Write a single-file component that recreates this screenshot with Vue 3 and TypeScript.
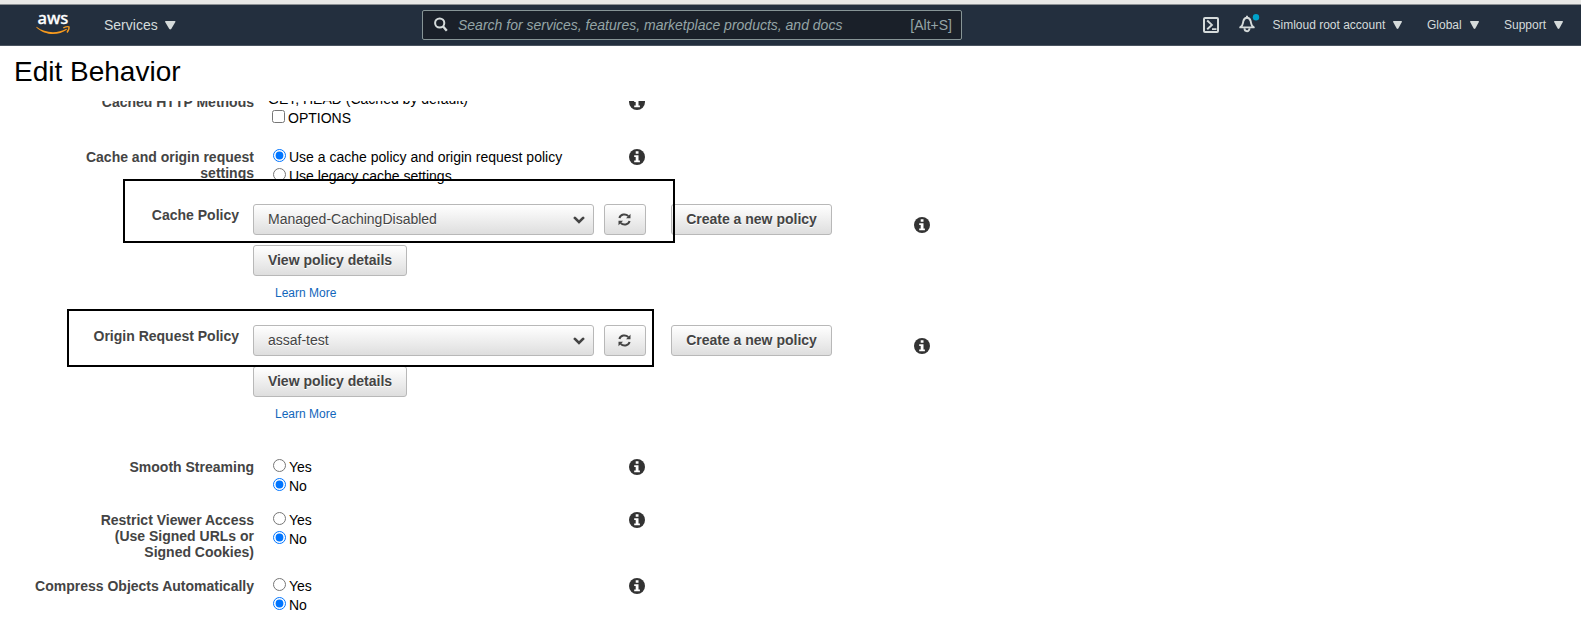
<script setup lang="ts">
import { defineComponent, h } from 'vue'

interface RadioRow {
  id: string
  label: string[]
  options: string[]
  selected: number
}

interface PolicyRow {
  id: string
  label: string
  value: string
}

const policies: PolicyRow[] = [
  { id: 'cache', label: 'Cache Policy', value: 'Managed-CachingDisabled' },
  { id: 'origin', label: 'Origin Request Policy', value: 'assaf-test' },
]

const toggles: RadioRow[] = [
  { id: 'smooth', label: ['Smooth Streaming'], options: ['Yes', 'No'], selected: 1 },
  {
    id: 'restrict',
    label: ['Restrict Viewer Access', '(Use Signed URLs or', 'Signed Cookies)'],
    options: ['Yes', 'No'],
    selected: 1,
  },
  { id: 'compress', label: ['Compress Objects Automatically'], options: ['Yes', 'No'], selected: 1 },
]

const originSettings = ['Use a cache policy and origin request policy', 'Use legacy cache settings']

const InfoIcon = defineComponent(() => () =>
  h('svg', { width: 16, height: 16, viewBox: '0 0 16 16' }, [
    h('circle', { cx: 8, cy: 8, r: 8, fill: '#333' }),
    h('path', { d: 'M6.7 2.2h2.8v2.5H6.7zM5.2 6.2h4.3v5.2h1.4v1.9H5.2v-1.9h1.5V8H5.2z', fill: '#fff' }),
  ]),
)

const Caret = defineComponent(() => () =>
  h('svg', { viewBox: '0 0 10 8', preserveAspectRatio: 'none' }, [
    h('path', { d: 'M0 .8Q0 0 .8 0H9.2Q10 0 10 .8L5.9 7.600Q5 8.200 4.100 7.600Z', fill: '#d5dbdb' }),
  ]),
)
</script>

<template>
  <div class="page">
    <header class="topbar">
      <svg class="logo" width="34" height="22" viewBox="0 0 34 22">
        <text x="1.4" y="10.8" textLength="31" lengthAdjust="spacingAndGlyphs" class="logo-text">aws</text>
        <path d="M.6 13.800C9 20.300 21 21 30.400 15.800L30.900 16.700C22 23 8.500 22.300 .3 14.400Z" fill="#f79a1e" />
        <path d="M27.300 14.800Q31.500 13 33 13.900Q33.500 16.100 31 19.500" fill="none" stroke="#f79a1e" stroke-width="1.400" />
      </svg>
      <div class="services">Services <Caret class="caret big" /></div>
      <div class="search">
        <svg class="mag" width="15" height="15" viewBox="0 0 15 15">
          <circle cx="5.700" cy="6" r="4.600" fill="none" stroke="#d5dbdb" stroke-width="2" />
          <path d="M8.900 9.300L12.800 13.700" stroke="#d5dbdb" stroke-width="2.400" />
        </svg>
        <span class="placeholder">Search for services, features, marketplace products, and docs</span>
        <span class="shortcut">[Alt+S]</span>
      </div>
      <div class="tools">
        <svg class="shell" width="16" height="16" viewBox="0 0 16 16">
          <rect x="1" y="1" width="14" height="14" rx="1" fill="none" stroke="#d5dbdb" stroke-width="2" />
          <path d="M4.200 3.500L8.900 7.900L4.200 12.300M9 12.100h4.500" fill="none" stroke="#d5dbdb" stroke-width="1.900" />
        </svg>
        <svg class="bell" width="21" height="19" viewBox="0 0 21 19">
          <path d="M1.200 13.400C4.300 11.500 3.800 9.600 4.300 7.200C4.900 4.900 6.300 3.700 8 3.700S11.100 4.900 11.700 7.200C12.200 9.600 11.700 11.500 14.800 13.400Z" fill="none" stroke="#d5dbdb" stroke-width="1.900" stroke-linejoin="round" />
          <path d="M8 1.700v2M5.500 14.300a2.500 2.900 0 0 0 5 0" fill="none" stroke="#d5dbdb" stroke-width="1.900" />
          <circle cx="17" cy="3.200" r="3.200" fill="#00a1c9" />
        </svg>
        <span class="menu account">Simloud root account <Caret class="caret" /></span>
        <span class="menu region">Global <Caret class="caret" /></span>
        <span class="menu support">Support <Caret class="caret" /></span>
      </div>
    </header>

    <h1>Edit Behavior</h1>

    <main class="scroll">
      <div class="form">
        <section class="row methods">
          <div class="label">Cached HTTP Methods</div>
          <div class="value">
            <div class="line">GET, HEAD (Cached by default)</div>
            <label class="option"><input type="checkbox" />OPTIONS</label>
          </div>
          <InfoIcon class="info" />
        </section>

        <section class="row origin-settings">
          <div class="label">Cache and origin request<br />settings</div>
          <div class="value">
            <label v-for="(text, i) in originSettings" :key="text" class="option">
              <input type="radio" name="settings" :checked="i === 0" />{{ text }}
            </label>
          </div>
          <InfoIcon class="info" />
        </section>

        <section v-for="p in policies" :key="p.id" class="policy" :class="p.id">
          <div class="plabel">{{ p.label }}</div>
          <div class="controls">
            <div class="buttons">
              <button class="btn select" type="button">
                {{ p.value }}
                <svg width="12" height="9" viewBox="0 0 12 9">
                  <path d="M1.900 1.900L6 5.900L10.100 1.900" fill="none" stroke="#444" stroke-width="2.700" stroke-linecap="round" />
                </svg>
              </button>
              <button class="btn refresh" type="button" aria-label="Refresh">
                <svg width="13" height="13" viewBox="0 0 13 13">
                  <path d="M1.400 5A5.100 4.700 0 0 1 10.300 3.200M11.600 8A5.100 4.700 0 0 1 2.700 9.800" fill="none" stroke="#444" stroke-width="2" />
                  <path d="M12.500.8V5.300H8zM.5 12.200V7.700H5z" fill="#444" />
                </svg>
              </button>
              <button class="btn create" type="button">Create a new policy</button>
            </div>
            <button class="btn view" type="button">View policy details</button>
            <a class="more">Learn More</a>
          </div>
          <InfoIcon class="info" />
          <div class="highlight"></div>
        </section>

        <section v-for="r in toggles" :key="r.id" class="row" :class="r.id">
          <div class="label"><div v-for="l in r.label" :key="l">{{ l }}</div></div>
          <div class="value">
            <label v-for="(o, i) in r.options" :key="o" class="option">
              <input type="radio" :name="r.id" :checked="i === r.selected" />{{ o }}
            </label>
          </div>
          <InfoIcon class="info" />
        </section>
      </div>
    </main>
  </div>
</template>

<style>
body {
  margin: 0;
  background: #fff;
}
</style>

<style scoped>
.page {
  height: 625px;
  overflow: hidden;
  display: flex;
  flex-direction: column;
  font: 14px/16px 'Liberation Sans', Arial, sans-serif;
  color: #000;
}
.topbar {
  flex: none;
  box-sizing: border-box;
  height: 46px;
  display: flex;
  align-items: center;
  padding-left: 36px;
  background: #232f3e;
  border-top: 4px solid #e8e8e6;
  border-bottom: 1px solid #4a5460;
  box-shadow: inset 0 1px #8d9194;
  color: #d5dbdb;
}
.logo {
  flex: none;
  margin-top: -1px;
  overflow: visible;
}
.logo-text {
  font: 500 17px 'Noto Sans', 'Open Sans', sans-serif;
  fill: #fff;
  stroke: #fff;
  stroke-width: 0.3px;
}
.services {
  width: 318px;
  margin-left: 34px;
  white-space: nowrap;
}
.caret {
  width: 9px;
  height: 8px;
  margin-left: 4.5px;
}
.caret.big {
  width: 10.5px;
  height: 8.500px;
  margin-left: 3.500px;
}
.search {
  box-sizing: border-box;
  width: 540px;
  height: 30px;
  display: flex;
  align-items: center;
  padding: 0 9px 0 11px;
  border: 1px solid #879596;
  border-radius: 2px;
  background: #1a2029;
  color: #95a5a6;
}
.mag {
  margin-right: 9px;
}
.placeholder {
  flex: 1;
  font-style: italic;
}
.tools {
  display: flex;
  align-items: center;
  margin-left: 241px;
  font-size: 12px;
  white-space: nowrap;
}
.bell {
  margin: -2px 0 0 20px;
}
.menu.account {
  width: 154.5px;
  margin-left: 12.5px;
}
.menu.region {
  width: 77px;
}
h1 {
  flex: none;
  height: 55px;
  margin: 0;
  padding-left: 14px;
  font-size: 28px;
  font-weight: 400;
  line-height: 52px;
}
.scroll {
  flex: 1;
  min-height: 0;
  overflow: hidden;
}
.form {
  margin-top: -7px;
}
.row {
  display: grid;
  grid-template-columns: 254px 347px 16px;
  column-gap: 14px;
  align-items: start;
}
.label,
.plabel {
  font-weight: 700;
  color: #444;
  text-align: right;
}
.methods,
.origin-settings {
  height: 55px;
}
.methods .value {
  margin-top: -3px;
}
.methods .line {
  margin-bottom: 3px;
}
.methods .option {
  padding-left: 4px;
}
.origin-settings .label {
  height: 32px;
  overflow: hidden;
}
.option {
  height: 19px;
  display: flex;
  align-items: flex-start;
  padding-left: 5px;
  white-space: nowrap;
}
.option input {
  flex: none;
  width: 13px;
  height: 13px;
  margin: 0 3px 0 0;
}
.info {
  display: block;
}
.policy {
  position: relative;
  height: 121px;
  display: grid;
  grid-template-columns: 239px 647px 16px;
  column-gap: 14px;
  align-items: start;
}
.policy.origin {
  height: 134px;
}
.plabel {
  padding-top: 3px;
}
.policy .info {
  margin-top: 13px;
}
.buttons {
  display: flex;
  margin-bottom: 10px;
}
.btn {
  box-sizing: border-box;
  height: 31px;
  display: flex;
  align-items: center;
  justify-content: center;
  padding: 0 0 2px;
  border: 1px solid #b8b8b8;
  border-radius: 3px;
  background: linear-gradient(#fff, #dedede);
  color: #444;
  font: 700 14px/16px 'Liberation Sans', Arial, sans-serif;
  text-shadow: 0 1px #fff;
}
.select {
  width: 341px;
  justify-content: space-between;
  padding: 0 8px 2px 14px;
  font-weight: 400;
}
.select svg {
  margin-top: 4px;
}
.refresh {
  width: 42px;
  margin-left: 10px;
  padding: 0 1px 1px 0;
}
.create {
  width: 161px;
  margin-left: 25px;
}
.view {
  width: 154px;
}
.more {
  display: block;
  margin: 9px 0 0 22px;
  font-size: 12px;
  color: #1166bb;
}
.highlight {
  position: absolute;
  box-sizing: border-box;
  border: 2px solid #000;
  left: 123px;
  top: -25px;
  width: 552px;
  height: 64px;
}
.origin .highlight {
  left: 67px;
  top: -16px;
  width: 587px;
  height: 58px;
}
.smooth {
  height: 53px;
}
.restrict {
  height: 66px;
}
</style>
